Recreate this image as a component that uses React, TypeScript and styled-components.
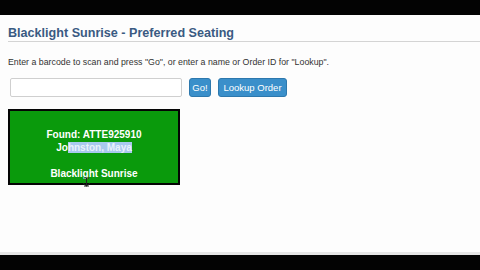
import React from "react";
import styled, { createGlobalStyle } from "styled-components";

const Global = createGlobalStyle`
  html, body { margin: 0; padding: 0; background: #000; }
  #root { width: 480px; height: 270px; }
  * { box-sizing: border-box; }
`;

const Frame = styled.div`
  width: 480px;
  height: 270px;
  display: flex;
  flex-direction: column;
  background: #000;
  font-family: "Liberation Sans", Arial, sans-serif;
`;

const Letterbox = styled.div<{ $h: number }>`
  height: ${(p) => p.$h}px;
  flex: none;
  background: #030303;
`;

const Page = styled.div`
  flex: 1;
  background: #fdfdfd;
  border-bottom: 3px solid #e6e6e6;
  padding: 11px 0 0 8px;
  display: flex;
  flex-direction: column;
  align-items: flex-start;
  position: relative;
`;

const Title = styled.h1`
  align-self: stretch;
  margin: 0;
  font-size: 12.6px;
  line-height: 15px;
  font-weight: bold;
  color: #3a5a82;
  border-bottom: 1px solid #d4d4d4;
`;

const Hint = styled.p`
  margin: 15px 0 0;
  font-size: 8.8px;
  line-height: 11px;
  color: #333;
`;

const Controls = styled.div`
  margin: 10px 0 0 2px;
  display: flex;
  align-items: center;
  gap: 7px;
`;

const TextInput = styled.input`
  width: 172px;
  height: 19px;
  border: 1px solid #cfcfcf;
  border-radius: 2px;
  background: #fff;
  padding: 0 4px;
`;

const Button = styled.button<{ $w: number }>`
  width: ${(p) => p.$w}px;
  height: 19px;
  padding: 0;
  border: 1px solid #2d78ad;
  border-radius: 3px;
  background: #3a8fca;
  color: #fff;
  font-family: "Liberation Sans", Arial, sans-serif;
  font-size: 9.5px;
  line-height: 17px;
  text-align: center;
`;

const Result = styled.div`
  margin-top: 12px;
  width: 172px;
  height: 76px;
  border: 2px solid #050505;
  background: #0a9a0c;
  padding-top: 17px;
  color: #fff;
  font-size: 10px;
  line-height: 13px;
  font-weight: bold;
  text-align: center;
`;

const Line = styled.div``;

const Selected = styled.span`
  background: #a9c9ef;
  color: #eaf2fb;
`;

const Cursor = styled.svg`
  position: absolute;
  left: 82px;
  top: 162px;
`;

export default function App() {
  return (
    <>
      <Global />
      <Frame>
        <Letterbox $h={15} />
        <Page>
          <Title>Blacklight Sunrise - Preferred Seating</Title>
          <Hint>
            Enter a barcode to scan and press "Go", or enter a name or Order ID for "Lookup".
          </Hint>
          <Controls>
            <TextInput type="text" />
            <Button $w={22}>Go!</Button>
            <Button $w={69}>Lookup Order</Button>
          </Controls>
          <Result>
            <Line>Found: ATTE925910</Line>
            <Line>
              Jo<Selected>hnston, Maya</Selected>
            </Line>
            <Line>&nbsp;</Line>
            <Line>Blacklight Sunrise</Line>
          </Result>
          <Cursor width="9" height="10" viewBox="0 0 9 10">
            <path d="M2 1h5M4.5 1v8M2 9h5M1 6l3.5 3L8 6" stroke="#222" strokeWidth="1" fill="none" />
          </Cursor>
        </Page>
        <Letterbox $h={15} />
      </Frame>
    </>
  );
}
